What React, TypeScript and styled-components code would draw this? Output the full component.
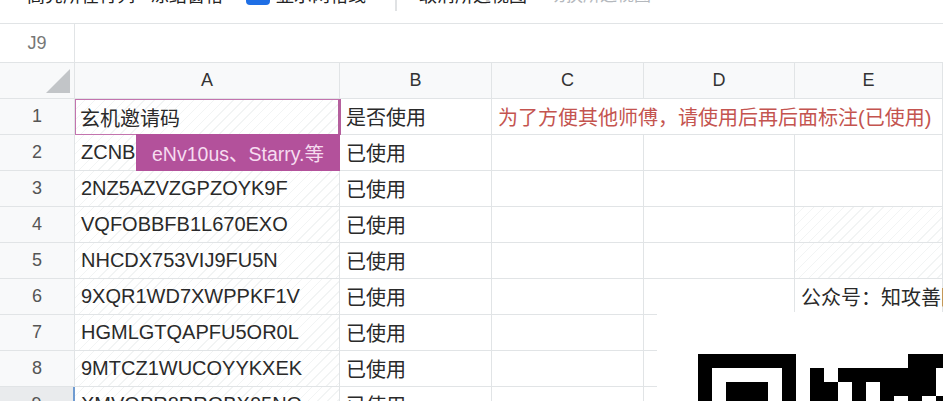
import styled, { createGlobalStyle } from "styled-components";

const FONT = `"Liberation Sans", Arial, "Noto Sans CJK SC", sans-serif`;
const LINE = "#e1e4e6";

const GlobalStyle = createGlobalStyle`
  html, body {
    margin: 0;
    padding: 0;
    background: #fff;
    overflow: hidden;
  }
`;

const Page = styled.div`
  position: relative;
  width: 943px;
  height: 401px;
  overflow: hidden;
  font-family: ${FONT};
  color: #222;
`;

const Toolbar = styled.div`
  height: 24px;
  box-sizing: border-box;
  border-bottom: 1px solid ${LINE};
  display: flex;
  align-items: flex-end;
  padding: 0 0 18px 27px;
  font-size: 18px;
  line-height: 24px;
  white-space: nowrap;
`;

const ToolLabel = styled.span<{ $gap?: number; $muted?: boolean }>`
  margin-left: ${(p) => p.$gap ?? 0}px;
  margin-bottom: -3px;
  color: ${(p) => (p.$muted ? "#b4b8bd" : "#222")};
  font-size: ${(p) => (p.$muted ? 17 : 18)}px;
`;

const Check = styled.span`
  width: 24px;
  height: 24px;
  margin-left: 23px;
  flex-shrink: 0;
  border-radius: 4px;
  background: #1f6fe5;
`;

const ToolDivider = styled.span`
  width: 2px;
  height: 20px;
  margin: 0 22px -6px 29px;
  flex-shrink: 0;
  background: #e0e2e4;
`;

const FormulaBar = styled.div`
  height: 39px;
  box-sizing: border-box;
  border-bottom: 1px solid ${LINE};
  display: flex;
`;

const NameBox = styled.div`
  width: 75px;
  box-sizing: border-box;
  border-right: 1px solid ${LINE};
  display: flex;
  align-items: center;
  justify-content: center;
  font-size: 18px;
  color: #777;
`;

const Sheet = styled.div`
  display: grid;
  grid-template-columns: 75px 265px 152px 152px 151px 1fr;
  grid-auto-rows: 36px;
`;

const Corner = styled.div`
  position: relative;
  background: #f8f9fa;
  border-right: 1px solid ${LINE};
  border-bottom: 1px solid ${LINE};
`;

const CornerMark = styled.svg`
  position: absolute;
  left: 46px;
  top: 6px;
`;

const ColHead = styled.div`
  display: flex;
  align-items: center;
  justify-content: center;
  background: #f8f9fa;
  border-right: 1px solid ${LINE};
  border-bottom: 1px solid ${LINE};
  font-size: 18px;
  color: #333;
`;

const RowHead = styled.div<{ $active?: boolean }>`
  display: flex;
  align-items: center;
  justify-content: center;
  box-sizing: border-box;
  background: ${(p) => (p.$active ? "#e9ebed" : "#f8f9fa")};
  border-right: ${(p) => (p.$active ? "2px solid #6f9bd1" : `1px solid ${LINE}`)};
  border-bottom: 1px solid ${LINE};
  font-size: 18px;
  color: #555;
`;

const Cell = styled.div<{ $hatched?: boolean; $span?: number; $red?: boolean }>`
  display: flex;
  align-items: center;
  padding-left: 6px;
  min-width: 0;
  box-sizing: border-box;
  white-space: nowrap;
  font-size: 20px;
  border-right: 1px solid ${LINE};
  border-bottom: 1px solid ${LINE};
  grid-column: span ${(p) => p.$span ?? 1};
  color: ${(p) => (p.$red ? "#c4544f" : "#2a2a2a")};
  background: ${(p) =>
    p.$hatched
      ? "repeating-linear-gradient(135deg, #fff 0 6px, #f2f4f4 6px 7px)"
      : "#fff"};
`;

const SelectedCell = styled(Cell)`
  position: relative;
  z-index: 2;
  padding-left: 4px;
  border: 1px solid #c374ae;
  border-right: 3px solid #b5609e;
  margin-right: -1px;
`;

const Tip = styled.div`
  position: absolute;
  top: 100%;
  right: -2px;
  width: 204px;
  height: 37px;
  display: flex;
  align-items: center;
  justify-content: center;
  background: #b3519b;
  color: #f6dcf0;
  font-size: 19.5px;
`;

const QrPanel = styled.div`
  position: absolute;
  left: 657px;
  top: 312px;
  right: 0;
  bottom: 0;
  z-index: 3;
  background: #fff;
  padding: 42px 0 0 41px;
`;

const QrCode = styled.svg`
  display: block;
`;

const codes = [
  "ZCNB",
  "2NZ5AZVZGPZOYK9F",
  "VQFOBBFB1L670EXO",
  "NHCDX753VIJ9FU5N",
  "9XQR1WD7XWPPKF1V",
  "HGMLGTQAPFU5OR0L",
  "9MTCZ1WUCOYYKXEK",
  "XMVQPR8RRQBX05NQ",
];

// QR modules to the right of the finder, [column, row, width]
const modules = [
  [7, 0, 3],
  [0, 1, 1],
  [2, 1, 7],
  [0, 2, 2],
  [3, 2, 1],
  [5, 2, 4],
  [0, 3, 2],
  [3, 3, 1],
  [5, 3, 1],
  [7, 3, 1],
  [9, 3, 1],
];

const App = () => {
  return (
    <Page>
      <GlobalStyle />
      <Toolbar>
        <ToolLabel>高亮所在行列</ToolLabel>
        <ToolLabel $gap={16}>冻结窗格</ToolLabel>
        <Check />
        <ToolLabel $gap={6}>显示网格线</ToolLabel>
        <ToolDivider />
        <ToolLabel>取消所选视图</ToolLabel>
        <ToolLabel $gap={22} $muted>
          切换所选视图
        </ToolLabel>
      </Toolbar>
      <FormulaBar>
        <NameBox>J9</NameBox>
      </FormulaBar>
      <Sheet>
        <Corner>
          <CornerMark width="24" height="24" viewBox="0 0 24 24">
            <polygon points="24,0 24,24 0,24" fill="#c2c5c8" />
          </CornerMark>
        </Corner>
        {["A", "B", "C", "D", "E"].map((col) => (
          <ColHead key={col}>{col}</ColHead>
        ))}

        <RowHead>1</RowHead>
        <SelectedCell $hatched>
          玄机邀请码
          <Tip>eNv10us、Starry.等</Tip>
        </SelectedCell>
        <Cell>是否使用</Cell>
        <Cell $span={3} $red>
          为了方便其他师傅，请使用后再后面标注(已使用)
        </Cell>

        {codes.map((code, i) => {
          const row = i + 2;
          return [
            <RowHead key={`h${row}`} $active={row === 9}>
              {row}
            </RowHead>,
            <Cell key={`a${row}`} $hatched>
              {code}
            </Cell>,
            <Cell key={`b${row}`}>已使用</Cell>,
            <Cell key={`c${row}`} />,
            <Cell key={`d${row}`} />,
            <Cell key={`e${row}`} $hatched={row === 4 || row === 5}>
              {row === 6 ? "公众号：知攻善防实验室" : ""}
            </Cell>,
          ];
        })}
      </Sheet>
      <QrPanel>
        <QrCode width="245" height="47" viewBox="0 0 245 47">
          <path d="M0 0h98v47H84V14H14v33H0z M28 28h42v19H28z" fill="#000" />
          {modules.map(([c, r, w]) => (
            <rect key={`${c}-${r}`} x={112 + c * 14} y={r * 14} width={w * 14} height={14} fill="#000" />
          ))}
        </QrCode>
      </QrPanel>
    </Page>
  );
};

export default App;
